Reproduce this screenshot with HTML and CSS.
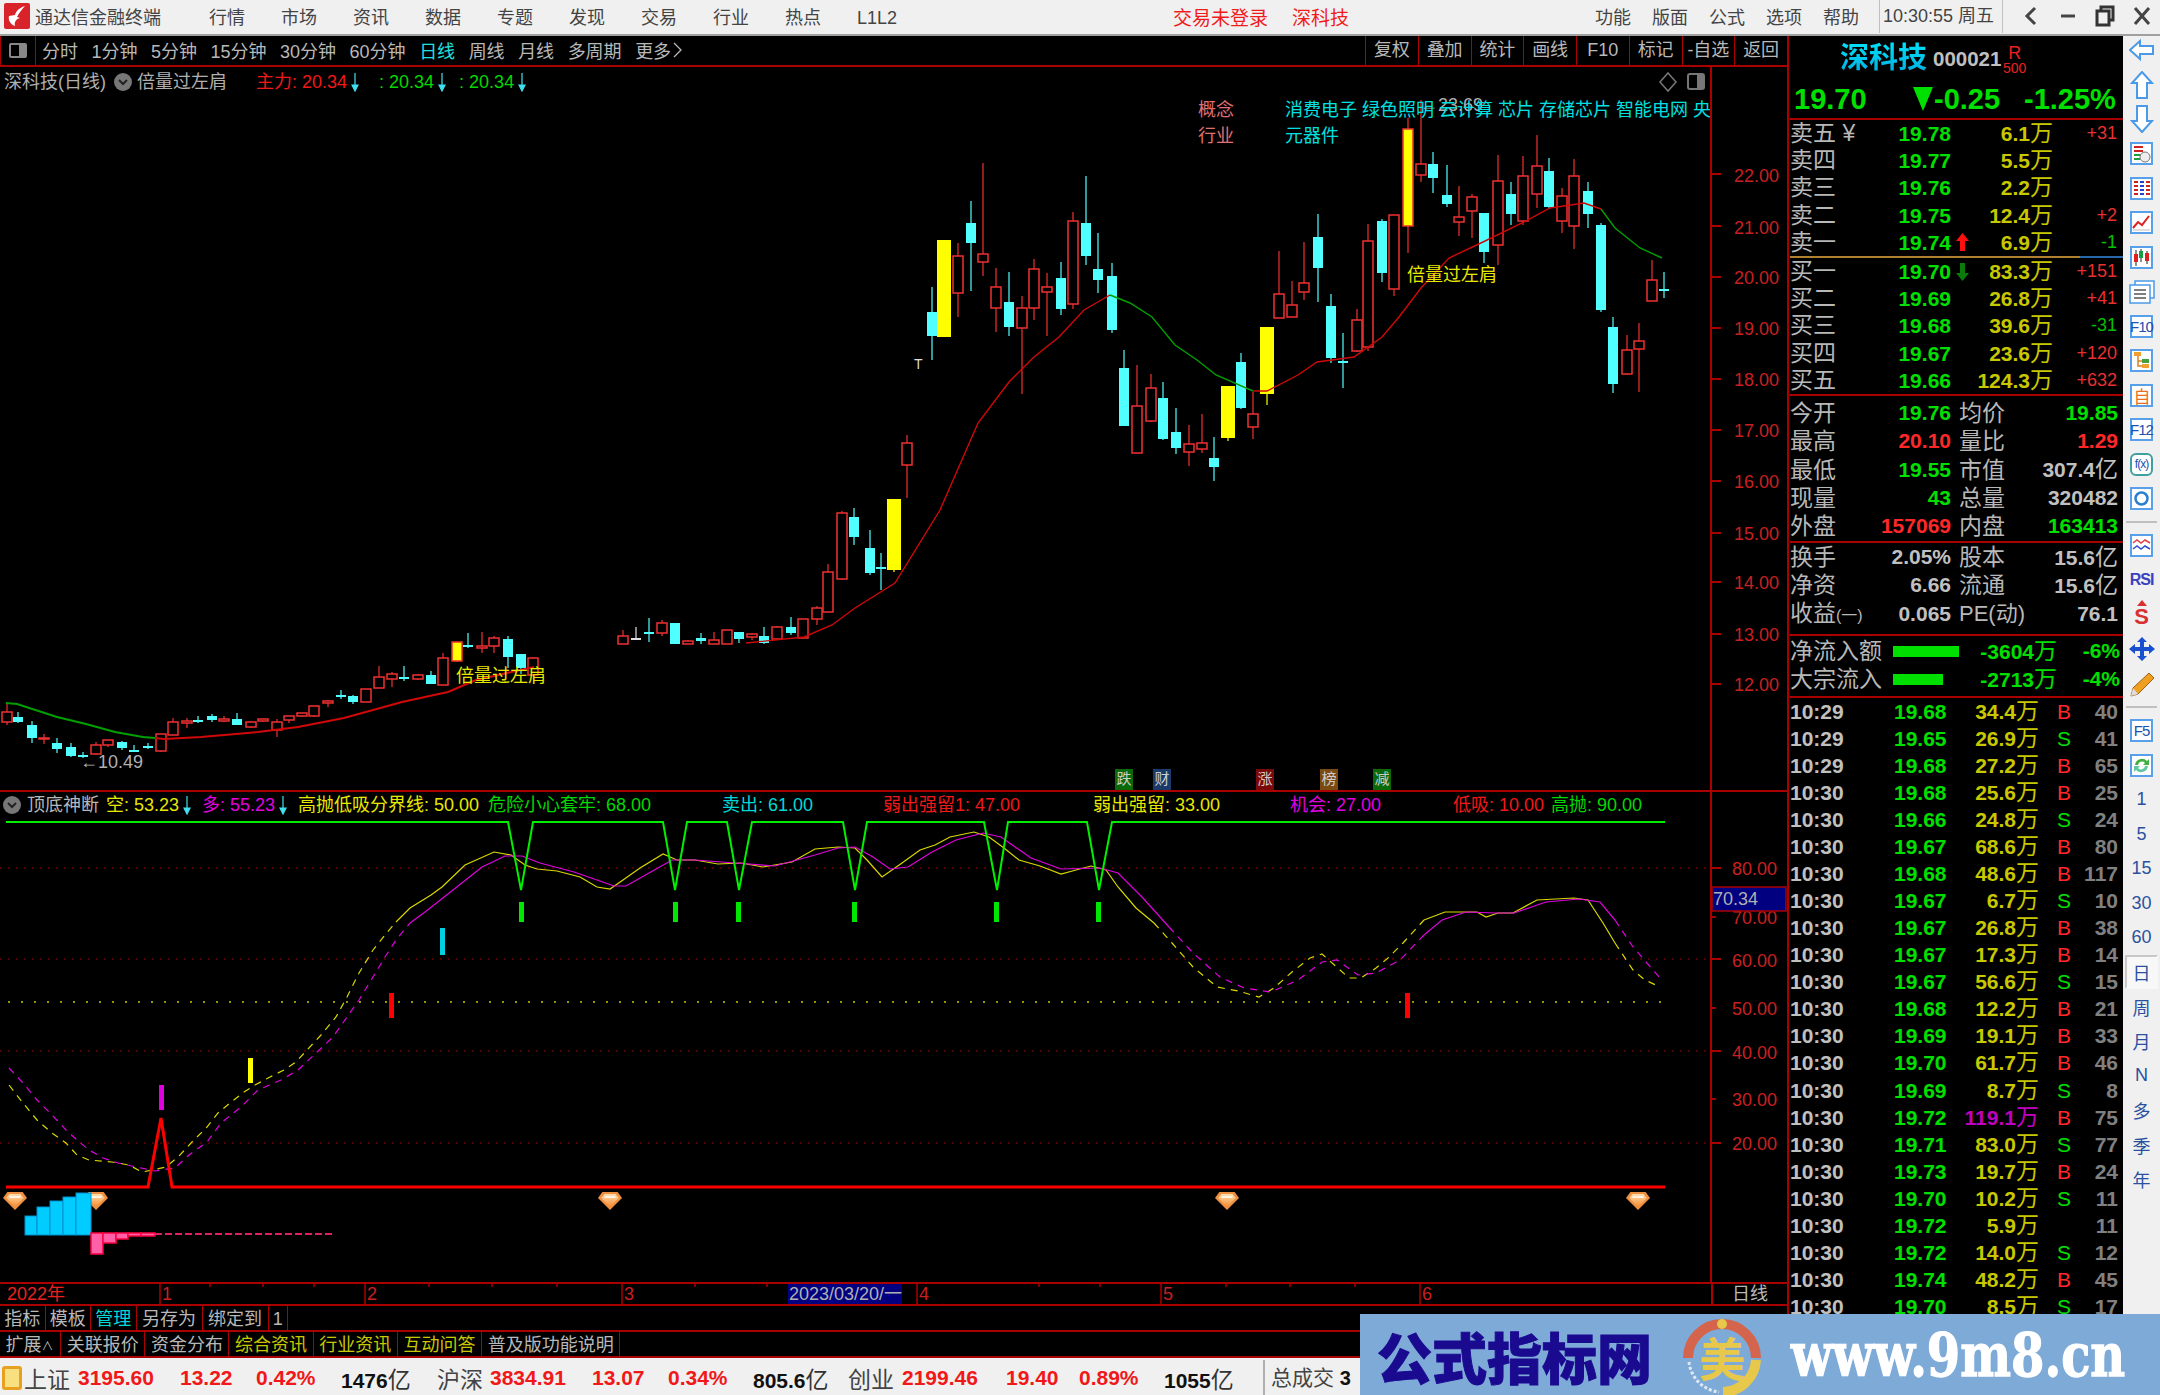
FILE: index.html
```html
<!DOCTYPE html>
<html lang="zh">
<head>
    <meta charset="UTF-8">
    <title>通达信金融终端</title>
    <link rel="stylesheet" href="styles.css">
</head>
<body>

    <!-- Title bar -->
    <div class="titlebar">
        <div class="logo">
            <svg width="26" height="26" viewBox="0 0 26 26"><rect width="26" height="26" rx="2" fill="#d8232a"/><path d="M21 3 C15 5 12 8 11 12 L5 13 C4 17 6 21 11 23 C10 19 12 16 16 15 L13 14 C15 10 18 6 21 3 Z" fill="#fff"/></svg>
        </div>
        <span class="app-name">通达信金融终端</span>
        <nav class="menu">
            <span>行情</span><span>市场</span><span>资讯</span><span>数据</span><span>专题</span>
            <span>发现</span><span>交易</span><span>行业</span><span>热点</span><span>L1L2</span>
        </nav>
        <div class="login"><span>交易未登录</span><span>深科技</span></div>
        <nav class="menu-right"><span>功能</span><span>版面</span><span>公式</span><span>选项</span><span>帮助</span></nav>
        <div class="clock">10:30:55 周五</div>
        <div class="winbtns">
            <span><svg width="16" height="24" viewBox="0 0 16 24"><path d="M12 4 L4 12 L12 20" fill="none" stroke="#444" stroke-width="3"/></svg></span>
            <span><svg width="16" height="24" viewBox="0 0 16 24"><path d="M1 12 H15" stroke="#444" stroke-width="3"/></svg></span>
            <span><svg width="20" height="22" viewBox="0 0 20 22"><path d="M6 5 V2 H18 V15 H14 M2 6 H14 V20 H2 Z" fill="none" stroke="#333" stroke-width="3"/></svg></span>
            <span><svg width="18" height="20" viewBox="0 0 18 20"><path d="M2 2 L16 18 M16 2 L2 18" stroke="#444" stroke-width="3"/></svg></span>
        </div>
    </div>

    <div class="workspace">
        <div class="left-col">

            <!-- Period toolbar -->
            <div class="toolbar">
                <div class="pane-btn"><span class="pane-icon"></span></div>
                <div class="periods">
                    <span>分时</span><span>1分钟</span><span>5分钟</span><span>15分钟</span><span>30分钟</span><span>60分钟</span>
                    <span class="on">日线</span><span>周线</span><span>月线</span><span>多周期</span>
                    <span class="more">更多<svg width="9" height="16" viewBox="0 0 9 16"><path d="M1 1 L8 8 L1 15" fill="none" stroke="#b8b8b8" stroke-width="1.3"/></svg></span>
                </div>
                <div class="tools">
                    <span>复权</span><span>叠加</span><span>统计</span><span>画线</span><span>F10</span><span>标记</span><span>-自选</span><span>返回</span>
                </div>
            </div>

            <!-- Candle chart -->
            <div class="kline">
                <div class="legend">
                    <span class="gray">深科技(日线)</span>
                    <svg class="chev" width="18" height="18" viewBox="0 0 18 18"><circle cx="9" cy="9" r="9" fill="#777"/><path d="M5 7 L9 11 L13 7" fill="none" stroke="#222" stroke-width="2"/></svg>
                    <span class="gray">倍量过左肩</span>
                    <span class="red lg-first">主力: 20.34</span><svg class="arr" width="8" height="19" viewBox="0 0 8 19"><path d="M4 0 V14 M1 12 L4 18 L7 12 Z"/></svg>
                    <span class="green lg-gap">: 20.34</span><svg class="arr" width="8" height="19" viewBox="0 0 8 19"><path d="M4 0 V14 M1 12 L4 18 L7 12 Z"/></svg>
                    <span class="green lg-gap2">: 20.34</span><svg class="arr" width="8" height="19" viewBox="0 0 8 19"><path d="M4 0 V14 M1 12 L4 18 L7 12 Z"/></svg>
                </div>
                <svg class="chart" width="1787" height="724" viewBox="0 67 1787 724">
                    <g id="candles"></g>
                    <g class="ma">
                        <polyline class="ma-g thick" points="6,703 17,704 57,717 86,724 115,732 143,737 155,738"/>
                        <polyline class="ma-r thick" points="155,738 164,739 201,737 258,732 298,727 344,718 402,702 448,692 476,680 534,667"/>
                        <polyline class="ma-r" points="746,643 804,637 832,625 855,608 895,583 940,510 978,423 1009,382 1034,357 1059,337 1084,310 1110,295"/>
                        <polyline class="ma-g" points="1110,295 1130,303 1152,317 1175,345 1197,360 1216,375 1253,391"/>
                        <polyline class="ma-r" points="1253,391 1267,391 1298,375 1317,362 1354,357 1382,337 1399,317 1421,288 1449,258 1483,242 1522,223 1550,208 1584,203 1601,209"/>
                        <polyline class="ma-g" points="1601,209 1615,228 1640,248 1662,258"/>
                    </g>
                    <text class="ct yellow-t" x="456" y="682">倍量过左肩</text>
                    <text class="ct yellow-t" x="1407" y="281">倍量过左肩</text>
                    <text class="ct gray-t" x="80" y="768">←10.49</text>
                    <text class="ct gray-t" x="1420" y="111">←23.69</text>
                    <text class="ct white-t" x="914" y="369">T</text>
                    <text class="ct pink-t" x="1198" y="116">概念</text>
                    <text class="ct pink-t" x="1198" y="142">行业</text>
                    <svg x="1285" y="90" width="426" height="60">
                        <text class="ct cyan-t" x="0" y="26">消费电子 绿色照明 云计算 芯片 存储芯片 智能电网 央视</text>
                        <text class="ct cyan-t" x="0" y="52">元器件</text>
                    </svg>
                    <path d="M1668 73 L1676 82 L1668 91 L1660 82 Z" fill="none" stroke="#777" stroke-width="1.5"/>
                    <rect x="1688" y="74" width="16" height="15" rx="2" fill="none" stroke="#777" stroke-width="2"/>
                    <rect x="1697" y="75" width="6" height="13" fill="#777"/>

                    <path class="axis" d="M1711 67 V791 M1711 174 H1721 M1711 226 H1721 M1711 277 H1721 M1711 328 H1721 M1711 379 H1721 M1711 430 H1721 M1711 481 H1721 M1711 533 H1721 M1711 582 H1721 M1711 634 H1721 M1711 684 H1721"/>
                    <g class="axis-t">
                        <text x="1734" y="182">22.00</text><text x="1734" y="234">21.00</text><text x="1734" y="284">20.00</text>
                        <text x="1734" y="335">19.00</text><text x="1734" y="386">18.00</text><text x="1734" y="437">17.00</text>
                        <text x="1734" y="488">16.00</text><text x="1734" y="540">15.00</text><text x="1734" y="589">14.00</text>
                        <text x="1734" y="641">13.00</text><text x="1734" y="691">12.00</text>
                    </g>
                </svg>
                <div class="news-tags">
                    <span class="tag t1">跌</span><span class="tag t2">财</span><span class="tag t3">涨</span><span class="tag t4">榜</span><span class="tag t5">减</span>
                </div>
            </div>

            <!-- Indicator pane -->
            <div class="indicator">
                <div class="ind-legend">
                    <span class="ind-name"><svg width="18" height="18" viewBox="0 0 18 18"><circle cx="9" cy="9" r="9" fill="#777"/><path d="M5 7 L9 11 L13 7" fill="none" stroke="#222" stroke-width="2"/></svg>顶底神断</span>
                    <span class="yellow lg-item">空: 53.23<svg class="arr" width="8" height="19" viewBox="0 0 8 19"><path d="M4 0 V14 M1 12 L4 18 L7 12 Z"/></svg></span>
                    <span class="magenta lg-item">多: 55.23<svg class="arr" width="8" height="19" viewBox="0 0 8 19"><path d="M4 0 V14 M1 12 L4 18 L7 12 Z"/></svg></span>
                    <span class="yellow">高抛低吸分界线: 50.00</span>
                    <span class="green">危险小心套牢: 68.00</span>
                    <span class="cyan">卖出: 61.00</span>
                    <span class="red">弱出强留1: 47.00</span>
                    <span class="yellow">弱出强留: 33.00</span>
                    <span class="magenta">机会: 27.00</span>
                    <span class="red">低吸: 10.00</span>
                    <span class="green">高抛: 90.00</span>
                </div>
                <svg class="chart" width="1787" height="490" viewBox="0 792 1787 490">
                    <defs>
                        <linearGradient id="gemFill" x1="0" y1="0" x2="0" y2="1"><stop offset="0" stop-color="#ffe0b0"/><stop offset="1" stop-color="#f58a30"/></linearGradient>
                        <symbol id="gem" viewBox="0 0 22 18" preserveAspectRatio="none"><path d="M4 0 H18 L22 6 L11 18 L0 6 Z" fill="#ef9040"/><path d="M6 2 H16 L19 6 L11 15 L3 6 Z" fill="url(#gemFill)"/><path d="M6 5 H16" stroke="#fff" stroke-width="1.5"/></symbol>
                    </defs>
                    <path class="dot-r" d="M0 868 H1711 M0 959 H1711 M0 1051 H1711 M0 1143 H1711"/>
                    <path class="dot-y" d="M8 1002 H1665"/>

                    <g class="kd kd-y">
                        <polyline class="dash" points="9,1085 23,1103 37,1120 52,1133 66,1143 77,1155 89,1160 112,1162 129,1165 142,1172 152,1170 166,1167 178,1157 192,1142 207,1127 218,1113 230,1103 244,1092 255,1085 270,1077 284,1070 296,1062 307,1050 321,1035 336,1017 347,997 359,973 373,950 385,935 396,922"/>
                        <polyline points="396,922 410,908 431,895 442,887 465,865 494,852 511,855 525,865 537,869 557,871 580,877 597,887 610,889 623,880 640,868 663,854 677,860 695,860 718,864 741,863 763,867 792,862 815,849 838,847 855,848 867,860 882,877 902,863 920,850 935,845 950,837 974,832 989,837 1004,848 1019,860 1040,866 1061,874 1076,870 1091,866 1106,870 1118,887 1136,908 1154,923"/>
                        <polyline class="dash" points="1154,923 1172,943 1193,967 1217,987 1238,991 1259,997 1274,988 1292,972 1310,958 1322,954 1340,970 1349,978 1361,978 1376,968 1388,958 1403,943 1424,920"/>
                        <polyline points="1424,920 1445,912 1477,912 1486,917 1498,913 1513,913 1537,900 1574,898 1588,900 1603,923 1615,943"/>
                        <polyline class="dash" points="1615,943 1633,970 1645,980 1660,987"/>
                    </g>
                    <g class="kd kd-m">
                        <polyline class="dash" points="9,1068 23,1083 37,1100 52,1115 66,1130 77,1140 89,1150 103,1158 118,1163 141,1168 155,1171 175,1168 189,1155 207,1142 221,1123 241,1107 258,1090 281,1080 298,1070 316,1053 333,1037 347,1017 359,1000 373,977 385,957 396,940 410,923"/>
                        <polyline points="410,923 425,912 453,890 482,867 505,856 522,856 540,863 574,872 597,880 614,886 626,886 649,873 672,860 695,860 735,863 775,866 815,855 838,848 855,847 873,857 890,869 908,867 932,852 956,840 983,833 1001,837 1031,858 1061,869 1100,868 1118,873 1142,897 1169,927"/>
                        <polyline class="dash" points="1169,927 1193,953 1220,977 1244,988 1271,992 1298,980 1322,962 1337,960 1358,975 1376,973 1400,960 1424,935"/>
                        <polyline points="1424,935 1442,920 1466,912 1496,913 1514,913 1546,902 1579,899 1600,902 1615,920"/>
                        <polyline class="dash" points="1615,920 1633,947 1660,978"/>
                    </g>

                    <path class="sig-g" d="M6 822 H508 L521 890 L533 822 H663 L675 890 L687 822 H727 L739 890 L752 822 H843 L855 890 L867 822 H984 L997 890 L1008 822 H1087 L1099 890 L1112 822 H1665"/>
                    <path class="sig-r" d="M6 1187 H148 L161 1118 L172 1187 H1665"/>

                    <g fill="#00e600">
                        <rect x="519" y="902" width="5" height="20"/><rect x="673" y="902" width="5" height="20"/><rect x="736" y="902" width="5" height="20"/>
                        <rect x="852" y="902" width="5" height="20"/><rect x="994" y="902" width="5" height="20"/><rect x="1096" y="902" width="5" height="20"/>
                    </g>
                    <rect x="440" y="928" width="5" height="27" fill="#00d0e0"/>
                    <rect x="389" y="993" width="5" height="25" fill="#ff0000"/>
                    <rect x="1405" y="993" width="5" height="25" fill="#ff0000"/>
                    <rect x="248" y="1058" width="5" height="25" fill="#ffff00"/>
                    <rect x="159" y="1085" width="5" height="25" fill="#e000e0"/>

                    <use href="#gem" x="3" y="1192" width="24" height="18"/>
                    <use href="#gem" x="84" y="1192" width="24" height="18"/>
                    <use href="#gem" x="598" y="1192" width="24" height="18"/>
                    <use href="#gem" x="1215" y="1192" width="24" height="18"/>
                    <use href="#gem" x="1626" y="1192" width="24" height="18"/>

                    <g fill="#00ccff" stroke="#0090d0" stroke-width="1">
                        <rect x="25" y="1216" width="12" height="19"/><rect x="37" y="1207" width="13" height="28"/><rect x="50" y="1201" width="13" height="34"/>
                        <rect x="63" y="1197" width="13" height="38"/><rect x="76" y="1193" width="15" height="42"/>
                    </g>
                    <g fill="#ff60a8" stroke="#ff0040" stroke-width="1.5">
                        <rect x="91" y="1233" width="12" height="21"/><rect x="103" y="1233" width="13" height="10"/><rect x="116" y="1233" width="12" height="6"/>
                        <rect x="128" y="1233" width="13" height="3"/><rect x="141" y="1233" width="14" height="3"/>
                    </g>
                    <path d="M155 1234 H335" stroke="#e02060" stroke-width="2" stroke-dasharray="7 3"/>

                    <path class="axis" d="M1711 792 V1282 M1711 868 H1721 M1711 917 H1716 M1711 959 H1721 M1711 1008 H1716 M1711 1051 H1721 M1711 1099 H1716 M1711 1143 H1721"/>
                    <g class="axis-t">
                        <text x="1732" y="875">80.00</text><text x="1732" y="924">70.00</text><text x="1732" y="967">60.00</text>
                        <text x="1732" y="1015">50.00</text><text x="1732" y="1059">40.00</text><text x="1732" y="1106">30.00</text><text x="1732" y="1150">20.00</text>
                    </g>
                    <rect x="1712" y="887" width="74" height="24" fill="#000080" stroke="#aa0000" stroke-width="1.5"/>
                    <text class="ct gray-t" x="1713" y="905">70.34</text>
                </svg>
            </div>

            <!-- Date axis -->
            <div class="dateaxis">
                <svg class="chart" width="1711" height="20" viewBox="0 1284 1711 20">
                    <path class="axis thin" d="M160 1284 V1304 M365 1284 V1304 M622 1284 V1304 M917 1284 V1304 M1161 1284 V1304 M1420 1284 V1304 M210 1284 V1287 M263 1284 V1287 M314 1284 V1287 M429 1284 V1287 M492 1284 V1287 M557 1284 V1287 M695 1284 V1287 M767 1284 V1287 M1039 1284 V1287 M1100 1284 V1287 M1226 1284 V1287 M1290 1284 V1287 M1355 1284 V1287"/>
                    <rect x="788" y="1284" width="114" height="20" fill="#000080"/>
                    <g class="axis-t">
                        <text class="year" x="7" y="1300">2022年</text><text x="162" y="1300">1</text><text x="367" y="1300">2</text><text x="624" y="1300">3</text>
                        <text x="919" y="1300">4</text><text x="1163" y="1300">5</text><text x="1422" y="1300">6</text>
                    </g>
                    <text class="ct gray-t" x="789" y="1300">2023/03/20/一</text>
                </svg>
                <span class="axis-unit">日线</span>
            </div>

            <div class="tabs tabs-a">
                <span>指标</span><span>模板</span><span class="cyan">管理</span><span class="wide">另存为</span><span class="wide">绑定到</span><span>1</span>
            </div>
            <div class="tabs tabs-b">
                <span class="first">扩展<i class="caret">∧</i></span><span>关联报价</span><span>资金分布</span><span class="olive">综合资讯</span><span class="olive">行业资讯</span><span class="olive">互动问答</span><span>普及版功能说明</span>
            </div>
        </div>

        <!-- Quote panel -->
        <div class="quote">
            <div class="q-title">
                <span class="q-name">深科技</span>
                <span class="q-code">000021</span>
                <span class="q-flag"><b>R</b><i>500</i></span>
            </div>
            <div class="q-price">
                <span class="q-last">19.70</span>
                <span class="q-chg"><span class="tri"></span>-0.25</span>
                <span class="q-pct">-1.25%</span>
            </div>

            <div class="book">
                <div class="book-row"><span class="lb">卖五 ¥</span><span class="g">19.78</span><span></span><span class="v">6.1<i>万</i></span><span class="up">+31</span></div>
                <div class="book-row"><span class="lb">卖四</span><span class="g">19.77</span><span></span><span class="v">5.5<i>万</i></span><span></span></div>
                <div class="book-row"><span class="lb">卖三</span><span class="g">19.76</span><span></span><span class="v">2.2<i>万</i></span><span></span></div>
                <div class="book-row"><span class="lb">卖二</span><span class="g">19.75</span><span></span><span class="v">12.4<i>万</i></span><span class="up">+2</span></div>
                <div class="book-row"><span class="lb">卖一</span><span class="g">19.74</span><svg class="ar" width="13" height="18" viewBox="0 0 13 18"><path d="M6.5 0 L13 8 H9 V18 H4 V8 H0 Z" fill="#ff1010"/></svg><span class="v">6.9<i>万</i></span><span class="dn">-1</span></div>
            </div>
            <div class="book-sep"></div>
            <div class="book">
                <div class="book-row"><span class="lb">买一</span><span class="g">19.70</span><svg class="ar" width="13" height="18" viewBox="0 0 13 18"><path d="M6.5 18 L13 10 H9 V0 H4 V10 H0 Z" fill="#0a7a0a"/></svg><span class="v">83.3<i>万</i></span><span class="up">+151</span></div>
                <div class="book-row"><span class="lb">买二</span><span class="g">19.69</span><span></span><span class="v">26.8<i>万</i></span><span class="up">+41</span></div>
                <div class="book-row"><span class="lb">买三</span><span class="g">19.68</span><span></span><span class="v">39.6<i>万</i></span><span class="dn">-31</span></div>
                <div class="book-row"><span class="lb">买四</span><span class="g">19.67</span><span></span><span class="v">23.6<i>万</i></span><span class="up">+120</span></div>
                <div class="book-row"><span class="lb">买五</span><span class="g">19.66</span><span></span><span class="v">124.3<i>万</i></span><span class="up">+632</span></div>
            </div>

            <div class="stats stats-a">
                <div class="stat"><span class="lb">今开</span><span class="g">19.76</span><span class="lb2">均价</span><span class="g">19.85</span></div>
                <div class="stat"><span class="lb">最高</span><span class="r">20.10</span><span class="lb2">量比</span><span class="r">1.29</span></div>
                <div class="stat"><span class="lb">最低</span><span class="g">19.55</span><span class="lb2">市值</span><span class="w">307.4<i>亿</i></span></div>
                <div class="stat"><span class="lb">现量</span><span class="g">43</span><span class="lb2">总量</span><span class="w">320482</span></div>
                <div class="stat"><span class="lb">外盘</span><span class="r">157069</span><span class="lb2">内盘</span><span class="g">163413</span></div>
            </div>
            <div class="stats stats-b">
                <div class="stat stat-b"><span class="lb">换手</span><span class="w">2.05%</span><span class="lb2">股本</span><span class="w">15.6<i>亿</i></span></div>
                <div class="stat stat-b"><span class="lb">净资</span><span class="w">6.66</span><span class="lb2">流通</span><span class="w">15.6<i>亿</i></span></div>
                <div class="stat stat-b"><span class="lb">收益<i class="paren">(一)</i></span><span class="w">0.065</span><span class="lb2 pe">PE(动)</span><span class="w">76.1</span></div>
            </div>
            <div class="flows">
                <div class="flow"><span class="lb">净流入额</span><span class="bar-cell"><span class="bar" style="width:66px"></span></span><span class="g">-3604<i>万</i></span><span class="g">-6%</span></div>
                <div class="flow"><span class="lb">大宗流入</span><span class="bar-cell"><span class="bar" style="width:50px"></span></span><span class="g">-2713<i>万</i></span><span class="g">-4%</span></div>
            </div>

            <div class="ticks">
                <div class="tick"><span>10:29</span><span class="g">19.68</span><span class="v">34.4<i>万</i></span><span class="b">B</span><span class="n">40</span></div>
                <div class="tick"><span>10:29</span><span class="g">19.65</span><span class="v">26.9<i>万</i></span><span class="s">S</span><span class="n">41</span></div>
                <div class="tick"><span>10:29</span><span class="g">19.68</span><span class="v">27.2<i>万</i></span><span class="b">B</span><span class="n">65</span></div>
                <div class="tick"><span>10:30</span><span class="g">19.68</span><span class="v">25.6<i>万</i></span><span class="b">B</span><span class="n">25</span></div>
                <div class="tick"><span>10:30</span><span class="g">19.66</span><span class="v">24.8<i>万</i></span><span class="s">S</span><span class="n">24</span></div>
                <div class="tick"><span>10:30</span><span class="g">19.67</span><span class="v">68.6<i>万</i></span><span class="b">B</span><span class="n">80</span></div>
                <div class="tick"><span>10:30</span><span class="g">19.68</span><span class="v">48.6<i>万</i></span><span class="b">B</span><span class="n">117</span></div>
                <div class="tick"><span>10:30</span><span class="g">19.67</span><span class="v">6.7<i>万</i></span><span class="s">S</span><span class="n">10</span></div>
                <div class="tick"><span>10:30</span><span class="g">19.67</span><span class="v">26.8<i>万</i></span><span class="b">B</span><span class="n">38</span></div>
                <div class="tick"><span>10:30</span><span class="g">19.67</span><span class="v">17.3<i>万</i></span><span class="b">B</span><span class="n">14</span></div>
                <div class="tick"><span>10:30</span><span class="g">19.67</span><span class="v">56.6<i>万</i></span><span class="s">S</span><span class="n">15</span></div>
                <div class="tick"><span>10:30</span><span class="g">19.68</span><span class="v">12.2<i>万</i></span><span class="b">B</span><span class="n">21</span></div>
                <div class="tick"><span>10:30</span><span class="g">19.69</span><span class="v">19.1<i>万</i></span><span class="b">B</span><span class="n">33</span></div>
                <div class="tick"><span>10:30</span><span class="g">19.70</span><span class="v">61.7<i>万</i></span><span class="b">B</span><span class="n">46</span></div>
                <div class="tick"><span>10:30</span><span class="g">19.69</span><span class="v">8.7<i>万</i></span><span class="s">S</span><span class="n">8</span></div>
                <div class="tick"><span>10:30</span><span class="g">19.72</span><span class="v big">119.1<i>万</i></span><span class="b">B</span><span class="n">75</span></div>
                <div class="tick"><span>10:30</span><span class="g">19.71</span><span class="v">83.0<i>万</i></span><span class="s">S</span><span class="n">77</span></div>
                <div class="tick"><span>10:30</span><span class="g">19.73</span><span class="v">19.7<i>万</i></span><span class="b">B</span><span class="n">24</span></div>
                <div class="tick"><span>10:30</span><span class="g">19.70</span><span class="v">10.2<i>万</i></span><span class="s">S</span><span class="n">11</span></div>
                <div class="tick"><span>10:30</span><span class="g">19.72</span><span class="v">5.9<i>万</i></span><span></span><span class="n">11</span></div>
                <div class="tick"><span>10:30</span><span class="g">19.72</span><span class="v">14.0<i>万</i></span><span class="s">S</span><span class="n">12</span></div>
                <div class="tick"><span>10:30</span><span class="g">19.74</span><span class="v">48.2<i>万</i></span><span class="b">B</span><span class="n">45</span></div>
                <div class="tick"><span>10:30</span><span class="g">19.70</span><span class="v">8.5<i>万</i></span><span class="s">S</span><span class="n">17</span></div>
            </div>
        </div>

        <!-- Right tool strip -->
        <div class="strip">
            <div class="si si-first"><svg width="26" height="24" viewBox="0 0 26 24"><path d="M1 12 L11 3 V8 H24 V16 H11 V21 Z" fill="#fff" stroke="#4a9ae8" stroke-width="2"/></svg></div>
            <div class="si"><svg width="24" height="28" viewBox="0 0 24 28"><path d="M12 1 L22 12 H17 V27 H7 V12 H2 Z" fill="#fff" stroke="#4a9ae8" stroke-width="2"/></svg></div>
            <div class="si"><svg width="24" height="28" viewBox="0 0 24 28"><path d="M12 27 L22 16 H17 V1 H7 V16 H2 Z" fill="#fff" stroke="#4a9ae8" stroke-width="2"/></svg></div>
            <div class="si"><span class="box"><svg width="19" height="19" viewBox="0 0 19 19"><path d="M2 3 H11 M2 7 H11" stroke="#d02020" stroke-width="2"/><path d="M2 11 H9 M2 15 H8" stroke="#20a040" stroke-width="2"/><circle cx="13" cy="13" r="5" fill="#eee" stroke="#777"/></svg></span></div>
            <div class="si"><span class="box"><svg width="19" height="19" viewBox="0 0 19 19"><path d="M2 3 H6 M2 7 H6 M2 11 H6 M2 15 H6" stroke="#d02020" stroke-width="2"/><path d="M8 3 H12 M8 7 H12 M8 11 H12 M8 15 H12" stroke="#2040d0" stroke-width="2"/><path d="M14 3 H18 M14 7 H18 M14 11 H18 M14 15 H18" stroke="#d02020" stroke-width="2"/></svg></span></div>
            <div class="si"><span class="box"><svg width="19" height="19" viewBox="0 0 19 19"><path d="M1 15 L6 9 L10 12 L17 3" fill="none" stroke="#e02020" stroke-width="2"/><path d="M1 17 H18" stroke="#bbb"/></svg></span></div>
            <div class="si"><span class="box"><svg width="19" height="19" viewBox="0 0 19 19"><path d="M4 2 V18 M9 1 V14 M15 3 V16" stroke="#222"/><rect x="2" y="6" width="4" height="8" fill="#e02020"/><rect x="7" y="3" width="4" height="7" fill="#18a040"/><rect x="13" y="5" width="4" height="8" fill="#e02020"/></svg></span></div>
            <div class="si"><svg width="26" height="24" viewBox="0 0 26 24"><rect x="6" y="1" width="19" height="17" fill="#fff" stroke="#4a9ae8" stroke-width="1.5"/><rect x="1" y="5" width="20" height="18" fill="#fff" stroke="#4a9ae8" stroke-width="1.5"/><path d="M5 10 H17 M5 14 H17 M5 18 H17" stroke="#555" stroke-width="1.5"/></svg></div>
            <div class="si"><span class="box box-t">F10</span></div>
            <div class="si"><span class="box"><svg width="19" height="19" viewBox="0 0 19 19"><path d="M6 5 V15 H10 M6 10 H10" fill="none" stroke="#e08020" stroke-width="1.5"/><rect x="2" y="1" width="7" height="4" fill="#f0a030"/><rect x="10" y="8" width="7" height="4" fill="#40a040"/><rect x="10" y="13" width="7" height="4" fill="#f0a030"/></svg></span></div>
            <div class="si"><span class="box box-t orange">自</span></div>
            <div class="si"><span class="box box-t">F12</span></div>
            <div class="si"><span class="box box-round box-t teal">f(x)</span></div>
            <div class="si"><span class="box"><svg width="19" height="19" viewBox="0 0 19 19"><circle cx="9.5" cy="9.5" r="6" fill="#fff" stroke="#2a80d0" stroke-width="2.5"/></svg></span></div>
            <div class="strip-sep"></div>
            <div class="si"><span class="box"><svg width="19" height="19" viewBox="0 0 19 19"><path d="M1 7 L5 4 L9 7 L13 4 L18 7" fill="none" stroke="#e04040" stroke-width="1.5"/><path d="M1 13 L5 10 L9 13 L13 10 L18 13" fill="none" stroke="#3050d0" stroke-width="1.5"/></svg></span></div>
            <div class="si"><span class="rsi">RSI</span></div>
            <div class="si"><span class="dollar">S</span></div>
            <div class="si"><svg width="28" height="26" viewBox="0 0 28 26"><path d="M14 1 L19 6 H16 V11 H21 V8 L27 13 L21 18 V15 H16 V20 H19 L14 25 L9 20 H12 V15 H7 V18 L1 13 L7 8 V11 H12 V6 H9 Z" fill="#1a50d0"/></svg></div>
            <div class="si"><svg width="26" height="26" viewBox="0 0 26 26"><path d="M20 2 L25 7 L9 23 L2 25 L4 17 Z" fill="#f0a020" stroke="#a06010"/><path d="M4 17 L9 23 L2 25 Z" fill="#ddd"/></svg></div>
            <div class="strip-sep"></div>
            <div class="si"><span class="box box-t">F5</span></div>
            <div class="si"><span class="box"><svg width="19" height="19" viewBox="0 0 19 19"><path d="M3 9 A7 7 0 0 1 15 5 L17 3 V9 H11 L13 7 A4 4 0 0 0 6 9 Z" fill="#40b040"/><path d="M16 10 A7 7 0 0 1 4 14 L2 16 V10 H8 L6 12 A4 4 0 0 0 13 10 Z" fill="#60c8a0"/></svg></span></div>
            <div class="si num">1</div><div class="si num">5</div><div class="si num">15</div><div class="si num">30</div><div class="si num">60</div>
            <div class="si num selected">日</div>
            <div class="si num">周</div><div class="si num">月</div><div class="si num">N</div><div class="si num">多</div><div class="si num">季</div><div class="si num">年</div>
        </div>
    </div>

    <!-- Index status bar -->
    <div class="statusbar">
        <span class="st-icon"></span>
        <span class="st-l">上证</span><span class="st-r">3195.60</span><span class="st-r">13.22</span><span class="st-r">0.42%</span><span class="st-k">1476<i>亿</i></span>
        <span class="st-l">沪深</span><span class="st-r">3834.91</span><span class="st-r">13.07</span><span class="st-r">0.34%</span><span class="st-k">805.6<i>亿</i></span>
        <span class="st-l">创业</span><span class="st-r">2199.46</span><span class="st-r">19.40</span><span class="st-r">0.89%</span><span class="st-k">1055<i>亿</i></span>
        <span class="st-l st-total">总成交 <b>3</b></span>
    </div>

    <!-- Site watermark over the bottom right corner -->
    <div class="banner">
        <span class="bn-name">公式指标网</span>
        <svg class="bn-logo" width="82" height="81" viewBox="0 0 82 81">
            <path d="M7 44 A34 34 0 0 1 75 44" fill="none" stroke="#d4644c" stroke-width="10"/>
            <path d="M75 46 A34 34 0 0 1 42 78" fill="none" stroke="#e8c84a" stroke-width="10"/>
            <path d="M8 48 A34 34 0 0 0 38 78" fill="none" stroke="#dfe8f4" stroke-width="3" stroke-dasharray="3 2"/>
            <circle cx="41" cy="10" r="5" fill="#e8c84a"/>
            <text class="bn-mark" x="41" y="62">美</text>
        </svg>
        <span class="bn-url">www.9m8.cn</span>
    </div>

    <script src="chart.js"></script>
</body>
</html>
```

FILE: styles.css
```css
* {
    margin: 0;
    padding: 0;
    box-sizing: border-box;
}

body {
    position: relative;
    width: 2160px;
    height: 1395px;
    overflow: hidden;
    display: flex;
    flex-direction: column;
    background: #000;
    color: #b8b8b8;
    font-family: "Liberation Sans", "Noto Sans CJK SC", sans-serif;
    font-size: 18px;
}

i { font-style: normal; }

.red { color: #f01818; }
.green { color: #00d800; }
.yellow { color: #e8e800; }
.magenta { color: #e000e0; }
.cyan { color: #00d8d8; }
.gray { color: #b0b0b0; }
.olive { color: #c8c800; }

.arr { margin-left: 4px; flex-shrink: 0; }
.arr path { fill: #40e0f0; stroke: #40e0f0; stroke-width: 1.2; }

/* title bar */
.titlebar {
    height: 36px;
    display: flex;
    align-items: center;
    padding-bottom: 2px;
    background: #f0f0f0;
    border-bottom: 2px solid #a0a0a0;
    color: #444;
    flex-shrink: 0;
}
.logo { width: 26px; height: 26px; margin-left: 4px; }
.app-name { margin-left: 5px; width: 127px; white-space: nowrap; }
.menu { display: flex; align-items: baseline; gap: 36px; margin-left: 47px; }
.login {
    display: flex;
    gap: 24px;
    margin-left: 276px;
    color: #f01c1c;
    font-size: 19px;
}
.menu-right { display: flex; gap: 21px; margin-left: auto; }
.clock {
    width: 124px;
    height: 34px;
    line-height: 34px;
    margin-left: 20px;
    padding-left: 3px;
    border-left: 1px solid #c0c0c0;
    border-right: 1px solid #c0c0c0;
    white-space: nowrap;
}
.winbtns { display: flex; margin-left: 9px; }
.winbtns span {
    width: 37px;
    display: flex;
    align-items: center;
    justify-content: center;
}

/* main area */
.workspace { flex: 1; display: flex; min-height: 0; }
.left-col {
    width: 1789px;
    flex-shrink: 0;
    display: flex;
    flex-direction: column;
    border-right: 2px solid #aa0000;
}

.toolbar {
    height: 31px;
    display: flex;
    align-items: center;
    border-bottom: 2px solid #aa0000;
    flex-shrink: 0;
}
.pane-btn {
    width: 36px;
    height: 100%;
    display: flex;
    align-items: center;
    justify-content: center;
    border-left: 1px solid #aa0000;
    border-right: 1px solid #aa0000;
}
.pane-icon {
    width: 18px;
    height: 15px;
    border: 2px solid #888;
    border-radius: 2px;
    background: linear-gradient(to right, transparent 55%, #888 55%);
}
.periods { display: flex; gap: 13.5px; margin-left: 6px; padding-bottom: 2px; white-space: nowrap; }
.periods .on { color: #20e0e0; }
.more { display: flex; align-items: center; gap: 2px; }
.tools { display: flex; margin-left: auto; height: 100%; }
.tools span {
    width: 52.75px;
    text-align: center;
    line-height: 29px;
    border-left: 1px solid #aa0000;
    white-space: nowrap;
}

.kline {
    position: relative;
    height: 725px;
    border-bottom: 2px solid #aa0000;
    flex-shrink: 0;
}
.chart { display: block; }
.legend {
    position: absolute;
    top: 4px;
    left: 4px;
    display: flex;
    align-items: center;
    line-height: 22px;
    white-space: nowrap;
}
.chev { margin: 0 5px 0 8px; }
.lg-first { margin-left: 29px; }
.lg-gap { margin-left: 20px; }
.lg-gap2 { margin-left: 13px; }
.news-tags {
    position: absolute;
    left: 1115px;
    top: 702px;
    height: 21px;
    display: flex;
    overflow: hidden;
}
.tag {
    width: 18px;
    height: 21px;
    line-height: 20px;
    font-size: 15px;
    text-align: center;
    color: #ccc;
}
.t1 { background: #0a6a0a; }
.t2 { background: #1a3a6a; margin-left: 20px; }
.t3 { background: #7a0a0a; margin-left: 85px; }
.t4 { background: #7a4a10; margin-left: 46px; }
.t5 { background: #0a6a0a; margin-left: 35px; }

/* svg chart text and lines */
.ct { font-size: 18px; }
.yellow-t { fill: #e8e800; }
.gray-t { fill: #b0b0b0; }
.white-t { fill: #ddd; font-size: 14px; }
.pink-t { fill: #e07070; }
.cyan-t { fill: #00e0e0; }
.axis { stroke: #aa0000; stroke-width: 2; fill: none; }
.axis.thin { stroke-width: 1.5; }
.axis-t text { fill: #c82020; font-size: 18px; }
.axis-t .year { fill: #e82020; }
.ma polyline { fill: none; stroke-width: 1.4; }
.ma .thick { stroke-width: 2; }
.ma-r { stroke: #d00808; }
.ma-g { stroke: #00a000; }
.dot-r { stroke: #a00000; stroke-width: 1; stroke-dasharray: 2 6; fill: none; }
.dot-y { stroke: #c8c800; stroke-width: 1.5; stroke-dasharray: 2 11; fill: none; }
.kd polyline { fill: none; stroke-width: 1.2; }
.kd .dash { stroke-dasharray: 7 6; }
.kd-y polyline { stroke: #d8d800; }
.kd-m polyline { stroke: #e000e0; }
.sig-g { stroke: #00f000; stroke-width: 2; fill: none; }
.sig-r { stroke: #ff0000; stroke-width: 3; fill: none; }

/* indicator */
.indicator { position: relative; height: 490px; flex-shrink: 0; }
.ind-legend {
    position: absolute;
    top: 0;
    left: 3px;
    display: grid;
    grid-template-columns: 103px 96px 96px 190px 234px 161px 210px 197px 163px 98px 100px;
    line-height: 24px;
    padding-top: 1px;
    white-space: nowrap;
}
.ind-name { display: flex; align-items: center; gap: 6px; }
.lg-item { display: flex; align-items: center; }
.dateaxis {
    height: 24px;
    display: flex;
    border-top: 2px solid #aa0000;
    border-bottom: 2px solid #aa0000;
    flex-shrink: 0;
}
.axis-unit {
    flex: 1;
    text-align: center;
    line-height: 20px;
    border-left: 2px solid #aa0000;
}
.tabs {
    display: flex;
    height: 26px;
    border-bottom: 2px solid #aa0000;
    flex-shrink: 0;
}
.tabs span {
    border-right: 1.5px solid #aa0000;
    white-space: nowrap;
}
.tabs-a span { padding: 2px 4.25px 0; line-height: 22px; }
.tabs-a .wide { padding: 2px 5.5px 0; }
.tabs-b span { padding: 3px 5.6px 0; line-height: 21px; }
.tabs-b .first { padding-right: 6.5px; }
.caret { font-size: 12px; }

/* quote panel */
.quote { width: 334px; flex-shrink: 0; padding-left: 1px; overflow: hidden; }
.q-title {
    height: 46px;
    display: flex;
    align-items: center;
    padding: 0 0 9px 50px;
}
.q-name {
    width: 93px;
    font-size: 29px;
    font-weight: 700;
    white-space: nowrap;
    background: linear-gradient(to bottom, #00f0ff, #00a8e0);
    -webkit-background-clip: text;
    background-clip: text;
    color: transparent;
}
.q-code { width: 72px; font-size: 20.5px; font-weight: 700; color: #c0c0c0; margin-top: 8px; }
.q-flag {
    display: flex;
    flex-direction: column;
    align-items: center;
    color: #e82020;
    line-height: 14px;
    margin-top: 10px;
    margin-left: -2px;
}
.q-flag b { font-size: 18px; font-weight: 400; line-height: 16px; }
.q-flag i { font-size: 14px; }
.q-price {
    height: 38px;
    display: flex;
    align-items: center;
    padding: 0 0 2px 4px;
    border-bottom: 2px solid #aa0000;
    color: #00e000;
    font-weight: 700;
    line-height: 30px;
}
.q-last { width: 119px; font-size: 29px; }
.q-chg { width: 111px; font-size: 29px; display: flex; align-items: center; }
.tri {
    width: 0;
    height: 0;
    border-left: 10px solid transparent;
    border-right: 10px solid transparent;
    border-top: 24px solid #00e000;
    margin-right: 1px;
}
.q-pct { font-size: 29px; white-space: nowrap; }

.g { color: #00e000; }
.r { color: #ff2828; }
.w { color: #c0c0c0; }
.lb, .lb2 { font-size: 23px; font-weight: 400; color: #b8b8b8; white-space: nowrap; }
.paren { font-size: 16px; }

.book-row {
    height: 27.2px;
    display: grid;
    grid-template-columns: 90px 71px 18px 84px 64px;
    align-items: center;
    line-height: 27px;
    font-size: 21px;
    font-weight: 700;
}
.book-row .g { text-align: right; }
.ar { margin-left: 5px; }
.v { color: #c8c800; text-align: right; white-space: nowrap; }
.v i, .w i, .g i { font-size: 23px; font-weight: 400; }
.up, .dn { text-align: right; font-size: 18px; font-weight: 400; }
.up { color: #e83030; }
.dn { color: #00c000; }
.book-sep {
    height: 2px;
    background: linear-gradient(to right, #b08030 87%, #2868a8 87%);
}

.stats { border-top: 2px solid #aa0000; }
.stats-a { padding: 3px 0 0.5px; }
.stats-b { padding-bottom: 7px; }
.stat {
    height: 28.3px;
    display: grid;
    grid-template-columns: 60px 101px 68px 99px;
    align-items: center;
    line-height: 28px;
    font-size: 21px;
    font-weight: 700;
}
.stat-b { height: 28px; }
.stat > span:nth-child(even) { text-align: right; white-space: nowrap; }
.lb2 { padding-left: 8px; }
.pe { font-size: 22px; }

.flows { border-top: 2px solid #aa0000; padding: 1px 0 3px; }
.flow {
    height: 28px;
    display: grid;
    grid-template-columns: 103px 86px 78px 63px;
    align-items: center;
    line-height: 28px;
    font-size: 21px;
    font-weight: 700;
}
.flow .g { text-align: right; white-space: nowrap; }
.bar { display: block; height: 11px; background: #00e000; }

.ticks { border-top: 2px solid #aa0000; }
.tick {
    height: 27.05px;
    display: grid;
    grid-template-columns: 104px 60px 85px 52px 27px;
    align-items: center;
    line-height: 27px;
    font-size: 21px;
    font-weight: 700;
    color: #c0c0c0;
}
.tick .big { color: #c000c0; }
.tick .b, .tick .s { padding-left: 18px; font-weight: 400; }
.tick .b { color: #ff2828; }
.tick .s { color: #00e000; }
.tick .n { color: #808080; text-align: right; white-space: nowrap; direction: rtl; }

/* right strip */
.strip {
    flex: 1;
    background: #f0f0f0;
    color: #2a50a0;
    overflow: hidden;
}
.si {
    height: 34.5px;
    display: flex;
    align-items: center;
    justify-content: center;
}
.si-first { height: 31.25px; padding-bottom: 3.25px; }
.strip-sep {
    height: 2px;
    margin: 5px 3px 5.5px;
    background: #c0c0c0;
}
.box {
    width: 23px;
    height: 23px;
    display: flex;
    align-items: center;
    justify-content: center;
    background: #fff;
    border: 2px solid #58a0ea;
}
.box-t { font-size: 15px; color: #2050b0; white-space: nowrap; letter-spacing: -1px; }
.box-round { border-radius: 6px; border-color: #40a0a0; }
.orange { color: #e87020; font-size: 17px; }
.teal { color: #2050b0; font-size: 12px; }
.rsi { font-size: 16px; font-weight: 700; color: #3a40c0; letter-spacing: -1px; }
.dollar { position: relative; font-size: 22px; font-weight: 700; color: #d83030; line-height: 22px; margin-top: 5px; }
.dollar::before {
    content: "";
    position: absolute;
    left: 3px;
    top: -6px;
    border-left: 5px solid transparent;
    border-right: 5px solid transparent;
    border-bottom: 6px solid #d83030;
}
.num { font-size: 18px; }
.selected {
    margin: 0 2px;
    background: #f8f8f8;
    border: 2px solid;
    border-color: #c8c8c8 #f8f8f8 #f8f8f8 #c8c8c8;
}

/* status bar */
.statusbar {
    height: 37px;
    flex-shrink: 0;
    display: grid;
    grid-template-columns: 24px 54px 102px 76px 85px 96px 53px 102px 76px 85px 95px 54px 104px 73px 85px 99px 1fr;
    align-items: center;
    padding-top: 2px;
    background: #f0f0f0;
    color: #222;
    font-size: 21px;
    font-weight: 400;
    white-space: nowrap;
}
.st-icon {
    width: 20px;
    height: 24px;
    margin-left: 2px;
    border: 3px solid #e8a020;
    border-radius: 3px;
    background: #f8e080;
}
.st-l { font-size: 23px; color: #444; }
.st-r { color: #f01818; font-weight: 700; }
.st-k { font-weight: 700; color: #111; }
.st-k i { font-size: 23px; font-weight: 400; color: #333; }
.st-total {
    height: 35px;
    line-height: 35px;
    font-size: 21px;
    border-left: 2px solid #b0b0b0;
    padding-left: 6px;
}
.st-total b { font-size: 20px; color: #111; }

/* watermark banner */
.banner {
    position: absolute;
    right: 0;
    bottom: 0;
    width: 800px;
    height: 81px;
    display: flex;
    align-items: center;
    padding-left: 17px;
    background: #7eaad8;
}
.bn-name {
    width: 275px;
    font-size: 55px;
    font-weight: 900;
    color: #1a0a90;
    -webkit-text-stroke: 1px #1a0a90;
    white-space: nowrap;
}
.bn-logo { margin-left: 29px; }
.bn-mark {
    fill: #e8c84a;
    font-size: 46px;
    font-weight: 700;
    text-anchor: middle;
}
.bn-url {
    margin-left: 28px;
    font-family: "DejaVu Serif", serif;
    font-size: 48px;
    font-weight: 700;
    color: #fff;
    -webkit-text-stroke: 1px #fff;
    white-space: nowrap;
    transform: scaleY(1.25);
}
```

FILE: chart.js
```javascript
// x, wick top, body top, body bottom, wick bottom, kind
// r = red hollow, c = cyan, w = white, y = yellow wide, ry = red with yellow inside
const candles = [
    [7,703,712,722,725,'r'],[18,712,717,722,723,'c'],[32,721,725,738,743,'c'],[44,734,738,739,744,'r'],
    [57,738,743,749,753,'c'],[71,743,747,756,757,'c'],[83,752,755,756,758,'c'],[96,742,745,754,755,'r'],
    [108,740,740,745,747,'r'],[122,741,742,748,750,'c'],[134,745,750,751,752,'c'],[148,743,746,748,749,'c'],
    [161,734,734,751,752,'r'],[173,718,722,735,735,'r'],[187,718,721,723,728,'r'],[198,716,720,721,723,'c'],
    [212,714,716,720,722,'c'],[224,716,719,721,722,'r'],[237,713,719,725,725,'c'],[251,721,722,727,728,'r'],
    [263,719,719,721,722,'r'],[277,719,722,730,737,'r'],[289,716,716,720,723,'r'],[302,713,713,716,717,'r'],
    [314,706,706,716,717,'r'],[328,700,701,703,707,'r'],[341,690,695,697,699,'c'],[353,695,696,702,704,'c'],
    [366,689,689,702,702,'r'],[379,666,677,688,688,'r'],[392,672,674,679,687,'r'],[404,666,677,678,681,'c'],
    [418,674,675,679,680,'r'],[431,671,675,684,684,'c'],[443,653,658,685,685,'r'],[457,642,642,661,662,'ry'],
    [468,633,645,646,648,'c'],[482,632,646,648,653,'r'],[494,636,638,646,653,'r'],[508,636,639,657,668,'c'],
    [521,654,654,668,674,'c'],[533,657,658,675,676,'r'],
    // lower half of these is hidden in the picture
    [623,630,636,644,644,'r'],[636,627,638,639,639,'w'],[649,618,632,633,642,'c'],[662,620,623,633,636,'r'],
    [675,623,623,644,644,'c'],[688,640,641,644,644,'r'],[701,633,638,641,644,'c'],[714,632,640,644,644,'r'],
    [727,630,630,644,644,'r'],[739,632,632,639,643,'c'],[752,633,634,637,640,'r'],[764,627,636,643,644,'c'],
    [777,626,627,639,640,'r'],[791,617,627,633,635,'c'],[803,619,619,638,638,'r'],[817,606,608,619,625,'r'],
    [828,564,572,612,612,'r'],[842,511,513,579,580,'r'],[854,508,517,537,545,'c'],[870,530,548,573,575,'c'],
    [881,553,567,569,590,'c'],[894,499,499,570,572,'y'],[907,435,443,465,498,'r'],
    [932,287,312,336,360,'c'],[944,240,240,337,337,'y'],[958,243,256,293,317,'r'],
    [971,201,223,243,291,'c'],[983,163,254,262,276,'r'],[996,268,287,308,332,'r'],[1009,272,302,327,336,'c'],
    [1022,296,308,328,394,'r'],[1034,259,269,308,320,'r'],[1047,273,287,292,336,'r'],[1061,262,278,309,315,'c'],
    [1073,212,221,304,309,'r'],[1086,176,223,256,265,'c'],[1098,233,269,280,293,'c'],[1112,263,276,330,333,'c'],
    [1124,350,368,426,426,'c'],[1137,365,406,453,453,'r'],[1151,374,388,421,422,'r'],[1163,382,398,439,440,'c'],
    [1176,408,432,448,454,'c'],[1189,425,444,452,466,'r'],[1202,414,443,449,453,'r'],[1214,437,458,467,481,'c'],
    [1228,386,386,438,441,'y'],[1241,353,362,408,409,'c'],[1253,392,414,427,439,'r'],[1267,327,327,394,405,'y'],
    [1279,251,294,318,318,'r'],[1292,281,305,317,317,'r'],[1304,242,283,292,300,'r'],[1318,214,237,268,302,'c'],
    [1331,294,306,358,363,'c'],[1343,333,361,363,388,'c'],[1357,309,320,351,352,'r'],[1368,224,241,347,351,'r'],
    [1382,219,221,273,282,'c'],[1394,215,215,289,296,'r'],[1408,118,129,226,253,'ry'],[1421,100,164,175,182,'r'],
    [1433,152,164,178,193,'c'],[1447,165,195,204,207,'c'],[1459,186,217,222,236,'r'],[1472,194,197,211,238,'r'],
    [1484,213,213,252,263,'c'],[1498,155,181,245,265,'r'],[1511,182,194,214,225,'c'],[1523,156,176,221,225,'r'],
    [1537,135,166,194,208,'r'],[1549,158,171,207,209,'c'],[1562,188,196,221,233,'r'],[1574,159,176,226,249,'r'],
    [1588,182,191,214,228,'c'],[1601,223,225,310,312,'c'],[1613,317,327,384,393,'c'],[1627,335,350,374,375,'r'],
    [1639,323,341,349,392,'r'],[1652,260,280,301,301,'r'],[1664,272,289,291,298,'c']
];

const colors = { r: '#f03030', c: '#50ffff', w: '#e0e0e0', y: '#ffff00', ry: '#f03030' };

let svg = '';
candles.forEach(([x, wt, bt, bb, wb, kind]) => {
    let wide = kind === 'y' ? 7 : 5;
    let color = colors[kind];
    svg += `<path d="M${x} ${wt}V${bt}M${x} ${bb}V${wb}" stroke="${color}" stroke-width="1.2"/>`;
    if (kind === 'r' || kind === 'ry') {
        let fill = kind === 'ry' ? '#ffff00' : '#000';
        svg += `<rect x="${x - wide}" y="${bt}" width="${wide * 2}" height="${bb - bt}" fill="${fill}" stroke="${color}" stroke-width="1.5"/>`;
    } else {
        svg += `<rect x="${x - wide}" y="${bt}" width="${wide * 2}" height="${Math.max(bb - bt, 2)}" fill="${color}"/>`;
    }
});
document.getElementById('candles').innerHTML = svg;
```
